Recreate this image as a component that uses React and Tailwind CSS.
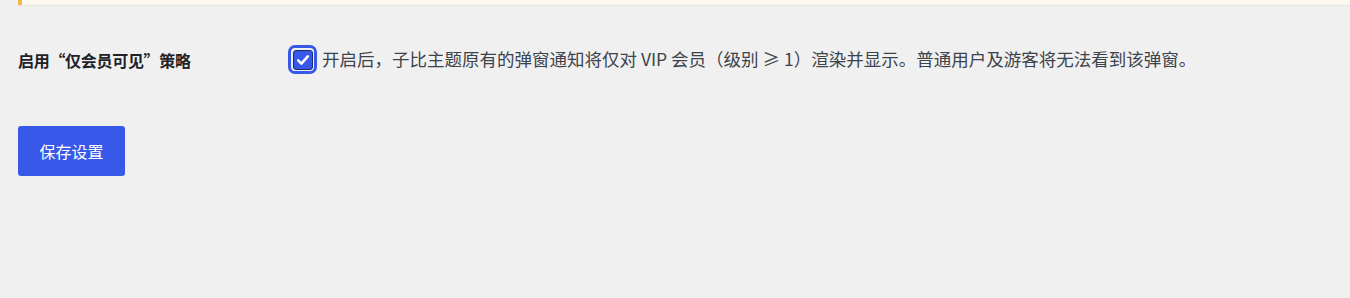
import React from 'react';

const FONT = { fontFamily: '"Noto Sans CJK SC", "Noto Sans", sans-serif' };

function Checkbox() {
  return (
    <span className="inline-flex h-[29px] w-[29px] shrink-0 items-center justify-center rounded-[7px] border-[3px] border-[#3858e9] bg-[#f0f0f1]">
      <span className="flex h-[20px] w-[20px] items-center justify-center rounded-[3px] border border-[#1e2a6e] bg-[#3858e9]">
        <svg viewBox="0 0 20 20" className="h-[16px] w-[16px]" fill="none">
          <path d="M4 10.5l4 4 8-9" stroke="#fff" strokeWidth="3.2" strokeLinecap="round" strokeLinejoin="round" />
        </svg>
      </span>
    </span>
  );
}

export default function App() {
  return (
    <div className="h-[298px] w-full overflow-hidden bg-[#f0f0f1] pl-[18px]" style={FONT}>
      <div className="h-[5px] border-l-4 border-[#f0b849] bg-[#fdf8ee] shadow-[0_1px_1px_rgba(0,0,0,0.04)]" />

      <div className="mt-[40px] flex items-center">
        <div className="w-[270px] text-[16px] font-bold tracking-[-0.3px] text-[#1d2327]">启用“仅会员可见”策略</div>
        <label className="flex items-center gap-[5px]">
          <Checkbox />
          <span className="text-[17.5px] text-[#3c434a]">
            开启后，子比主题原有的弹窗通知将仅对 VIP 会员（级别 ≥ 1）渲染并显示。普通用户及游客将无法看到该弹窗。
          </span>
        </label>
      </div>

      <button className="mt-[52px] flex h-[50px] w-[107px] items-center justify-center rounded-[3px] bg-[#3858e9] text-[16px] text-white">
        保存设置
      </button>
    </div>
  );
}
